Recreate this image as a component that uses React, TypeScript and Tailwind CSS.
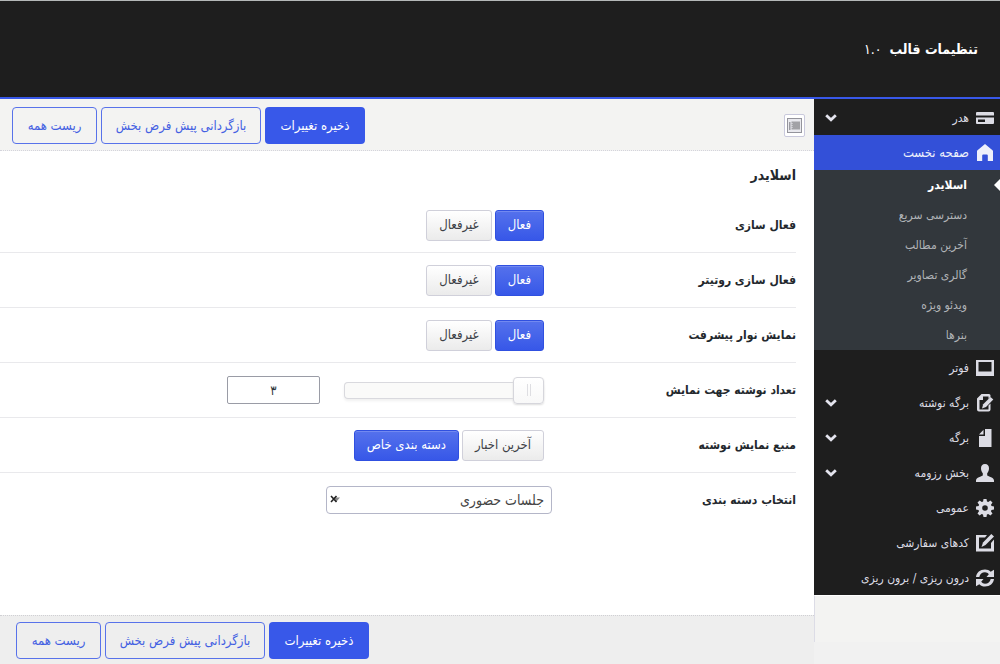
import { useState } from 'react'
import type { ReactNode } from 'react'

function Svg({ children }: { children: ReactNode }) {
  return (
    <svg viewBox="0 0 18 18" className="h-[18px] w-[18px] shrink-0" fill="currentColor" aria-hidden="true">
      {children}
    </svg>
  )
}

const ICONS: Record<string, ReactNode> = {
  header: (
    <path fillRule="evenodd" d="M1 3h16q1 0 1 1v2.500H0V4q0-1 1-1zM0 8.500h18V14q0 1-1 1H1q-1 0-1-1zM2 10.500v2.500h7v-2.500z" />
  ),
  home: <path d="M9 0l7.500 6.300q.5.400.5 1V17h-5.200v-5.500q0-1-1-1H7.200q-1 0-1 1V17H1V7.300q0-.6.500-1z" />,
  footer: <path fillRule="evenodd" d="M0 1h18v16H0zM2.500 3v9.500h13V3z" />,
  post: (
    <>
      <path fillRule="evenodd" d="M5.500 0H13q1.500 0 1.500 1.500v1.300L12.500 5V2.500H7V6H3.500v9.500h9v-4l2-2v6q0 2-2 2H3q-2 0-2-2V4.500z" />
      <path d="M14.500 3l2.800 2.500-7.300 7.500-4 1.500 1.200-4.200z" />
    </>
  ),
  page: <path d="M9 0h6.500v18H3V7h6zM7.500.8v4.700H3z" />,
  person: (
    <path d="M9 0c2.600 0 4 1.700 4 4.300 0 2-.7 3.800-1.800 4.900v2.300c1.200.9 6.800 1.800 6.800 5V18H0v-1.500c0-3.200 5.600-4.100 6.800-5V9.200C5.700 8.100 5 6.300 5 4.300 5 1.700 6.400 0 9 0z" />
  ),
  gear: (
    <path
      fillRule="evenodd"
      d="M7.500 0h3l.5 2.600 1.300.5L14.400 1.500l2.100 2.100L15 5.800l.5 1.300 2.500.4v3l-2.500.5-.6 1.300 1.600 2.100-2.100 2.100-2.200-1.500-1.300.5-.4 2.500h-3L7 15.400l-1.300-.5-2.100 1.600-2.100-2.100L3 12.200l-.5-1.300L0 10.500v-3L2.600 7l.5-1.300L1.500 3.600l2.100-2.100L5.800 3l1.300-.5zM9 6.200a2.800 2.800 0 100 5.600 2.800 2.800 0 000-5.600z"
    />
  ),
  code: (
    <>
      <path d="M0 1h11L9 3.500H3v11h12V9l3-3.500V17.500H0z" />
      <path d="M15.300 0L18 2.500 9.500 11 5.500 13l1.500-4.500z" />
    </>
  ),
  refresh: (
    <path d="M0 8C.5 3.500 4 .5 9 .5c2.300 0 4.300.9 5.700 2.300L18 .8V8h-7.500l2.300-2.800C11.800 4 10.500 3.300 9 3.300 6 3.300 3.900 5 3.300 8zM18 10c-.5 4.500-4 7.500-9 7.500-2.300 0-4.300-.9-5.700-2.300L0 17.200V10h7.500l-2.300 2.800c1 1.200 2.300 1.900 3.800 1.900 3 0 5.100-1.700 5.700-4.700z" />
  ),
}

const SUB_ITEMS = ['اسلایدر', 'دسترسی سریع', 'آخرین مطالب', 'گالری تصاویر', 'ویدئو ویژه', 'بنرها']

const LOWER_ITEMS = [
  { icon: 'footer', label: 'فوتر', expandable: false },
  { icon: 'post', label: 'برگه نوشته', expandable: true },
  { icon: 'page', label: 'برگه', expandable: true },
  { icon: 'person', label: 'بخش رزومه', expandable: true },
  { icon: 'gear', label: 'عمومی', expandable: false },
  { icon: 'code', label: 'کدهای سفارشی', expandable: false },
  { icon: 'refresh', label: 'درون ریزی / برون ریزی', expandable: false },
]

interface MenuItemProps {
  icon: string
  label: string
  expandable?: boolean
  active?: boolean
}

function MenuItem({ icon, label, expandable, active }: MenuItemProps) {
  return (
    <a
      href="#"
      className={`flex h-[35px] items-center gap-[7px] ps-[6px] pe-[11px] ${
        active ? 'bg-[#3350d8] text-[13px] text-[#eef0fb]' : 'text-xs text-[#dcdce4]'
      }`}
    >
      <Svg>{ICONS[icon]}</Svg>
      <span className="flex-1 whitespace-nowrap">{label}</span>
      {expandable && (
        <svg viewBox="0 0 12 8" className="h-2 w-3" fill="none" stroke="#e4e4ee" strokeWidth="2.800" aria-hidden="true">
          <path d="M1.200 1.200L6 5.800l4.800-4.600" />
        </svg>
      )}
    </a>
  )
}

function ActionButtons() {
  const outline = 'h-[37px] rounded-[4px] border border-[#5872ea] text-[13px] text-[#4360e2]'
  return (
    <div className="flex gap-1">
      <button className="h-[37px] w-[100px] rounded-[4px] bg-[#3858e9] text-[13px] text-white">ذخیره تغییرات</button>
      <button className={`${outline} w-[160px]`}>بازگردانی پیش فرض بخش</button>
      <button className={`${outline} w-[85px]`}>ریست همه</button>
    </div>
  )
}

function Row({ label, htmlFor, last, children }: { label: string; htmlFor?: string; last?: boolean; children: ReactNode }) {
  return (
    <div className={`ms-[18px] flex items-center ${last ? 'h-[54px]' : 'h-[55px] border-b border-[#e9e9ec]'}`}>
      <label htmlFor={htmlFor} className="w-[244px] shrink-0 text-xs font-bold whitespace-nowrap text-[#23282d]">
        {label}
      </label>
      {children}
    </div>
  )
}

function ButtonSet({ name, options, initial = 0 }: { name: string; options: string[]; initial?: number }) {
  const [selected, setSelected] = useState(initial)
  return (
    <div role="group" aria-label={name} className="flex gap-[3px] ps-2">
      {options.map((option, i) => (
        <button
          key={option}
          aria-pressed={i === selected}
          onClick={() => setSelected(i)}
          className={`h-[31px] rounded-[3px] border px-3 text-[13px] whitespace-nowrap ${
            i === selected
              ? 'border-[#3050e0] bg-linear-to-b from-[#5571ec] to-[#3757e8] text-white shadow-[inset_0_1px_0_#7289f0]'
              : 'border-[#d0d0da] bg-linear-to-b from-white to-[#ebebeb] text-[#3c4046]'
          }`}
        >
          {option}
        </button>
      ))}
    </div>
  )
}

export default function App() {
  const [count, setCount] = useState(3)

  return (
    <div dir="rtl" className="flex min-h-screen flex-col bg-[#f1f1f1] font-['DejaVu_Sans_Condensed','DejaVu_Sans',sans-serif]">
      <header className="flex h-[99px] items-center gap-2 border-t border-b-2 border-t-[#b4b8b8] border-b-[#3858e9] bg-[#1e1e1e] ps-[22px] text-white">
        <h1 className="text-sm font-bold">تنظیمات قالب</h1>
        <span className="text-sm">۱.۰</span>
      </header>

      <div className="flex flex-1">
        <aside className="flex w-[186px] shrink-0 flex-col">
          <nav className="bg-[#1e1e1e]">
            <div className="pt-px">
              <MenuItem icon="header" label="هدر" expandable />
            </div>
            <MenuItem icon="home" label="صفحه نخست" active />
            <ul className="bg-[#32373c]">
              {SUB_ITEMS.map((item, i) => (
                <li key={item} className="relative">
                  <a
                    href="#"
                    className={`flex h-[30px] items-center ps-[33px] text-xs ${i === 0 ? 'font-bold text-white' : 'text-[#b0b3b7]'}`}
                  >
                    {item}
                  </a>
                  {i === 0 && (
                    <span className="absolute top-[9px] right-0 border-y-[6px] border-r-[6px] border-y-transparent border-r-white" />
                  )}
                </li>
              ))}
            </ul>
            {LOWER_ITEMS.map((item) => (
              <MenuItem key={item.label} {...item} />
            ))}
          </nav>
          <div className="mb-[22px] flex-1 border-t border-l border-t-white border-l-[#dcdce6] bg-[#f3f3f2]" />
        </aside>

        <main className="flex min-w-0 flex-1 flex-col bg-white">
          <div className="flex h-[52px] items-center justify-between border-b border-dotted border-[#d4d4dc] bg-[#f3f3f2] ps-[9px] pe-3 pt-[2px]">
            <button
              aria-label="نمایش همه"
              className="flex h-[23px] w-[21px] items-center justify-center rounded-[2px] border border-[#c9c9dc] bg-white"
            >
              <svg viewBox="0 0 15 15" className="h-[15px] w-[15px]" aria-hidden="true">
                <rect x="0.500" y="0.500" width="14" height="14" fill="#e9e9ee" stroke="#94949c" />
                <path d="M2 4h1.500v8H2z" fill="#9c9ca2" />
                <path d="M4.500 3.500H13v8H4.500z" fill="#a2a2a6" />
                <path d="M4.500 5.500h1M4.500 7.500h1M4.500 9.500h1" stroke="#e9e9ee" />
              </svg>
            </button>
            <ActionButtons />
          </div>

          <section className="flex-1">
            <h2 className="ms-[18px] flex h-[47px] items-center text-sm font-bold text-[#23282d]">اسلایدر</h2>
            <Row label="فعال سازی">
              <ButtonSet name="فعال سازی" options={['فعال', 'غیرفعال']} />
            </Row>
            <Row label="فعال سازی روتیتر">
              <ButtonSet name="فعال سازی روتیتر" options={['فعال', 'غیرفعال']} />
            </Row>
            <Row label="نمایش نوار پیشرفت">
              <ButtonSet name="نمایش نوار پیشرفت" options={['فعال', 'غیرفعال']} />
            </Row>
            <Row label="تعداد نوشته جهت نمایش" htmlFor="post-count">
              <div className="flex items-center gap-6 ps-2">
                <input
                  type="range"
                  min={3}
                  max={20}
                  value={count}
                  onChange={(e) => setCount(Number(e.target.value))}
                  aria-label="تعداد نوشته"
                  className="h-[17px] w-[200px] appearance-none rounded-[4px] bg-[#fafaf9] shadow-[inset_0_0_0_1px_#d9d9de,0_2px_3px_#f0f0f0] [&::-webkit-slider-thumb]:h-[27px] [&::-webkit-slider-thumb]:w-[31px] [&::-webkit-slider-thumb]:appearance-none [&::-webkit-slider-thumb]:rounded-[4px] [&::-webkit-slider-thumb]:border [&::-webkit-slider-thumb]:border-[#d6d6dc] [&::-webkit-slider-thumb]:bg-[linear-gradient(#dedee2,#dedee2),linear-gradient(#dedee2,#dedee2),linear-gradient(#fff,#f8f8f8)] [&::-webkit-slider-thumb]:[background-size:1px_12px,1px_12px,100%_100%] [&::-webkit-slider-thumb]:[background-position:13px_center,16px_center,0_0] [&::-webkit-slider-thumb]:bg-no-repeat [&::-webkit-slider-thumb]:shadow-[0_1px_2px_#dddddd]"
                />
                <input
                  id="post-count"
                  type="text"
                  value={count.toLocaleString('fa-IR')}
                  readOnly
                  className="h-7 w-[93px] rounded-[2px] border border-[#9a9ca6] bg-white text-center text-[13px] text-[#32373c]"
                />
              </div>
            </Row>
            <Row label="منبع نمایش نوشته">
              <ButtonSet name="منبع نمایش نوشته" options={['آخرین اخبار', 'دسته بندی خاص']} initial={1} />
            </Row>
            <Row label="انتخاب دسته بندی" htmlFor="category" last>
              <div className="relative">
                <select
                  id="category"
                  className="h-7 w-[226px] appearance-none rounded-[4px] border border-[#b4b6c8] bg-white ps-[7px] text-sm text-[#444444]"
                >
                  <option>جلسات حضوری</option>
                </select>
                <svg viewBox="0 0 10 8" className="pointer-events-none absolute top-[9px] left-1 h-2 w-[10px]" aria-hidden="true">
                  <path d="M3.500 2.500H10L6.500 6.500z" fill="#888888" />
                  <path d="M1 1l5.500 6M6.500 1L1 7" stroke="#222222" strokeWidth="1.600" />
                </svg>
              </div>
            </Row>
          </section>

          <footer className="flex h-[49px] items-center justify-end border-t border-dotted border-[#d0d0d4] bg-[#eeeeee] pe-4 pt-px">
            <ActionButtons />
          </footer>
        </main>
      </div>
    </div>
  )
}
